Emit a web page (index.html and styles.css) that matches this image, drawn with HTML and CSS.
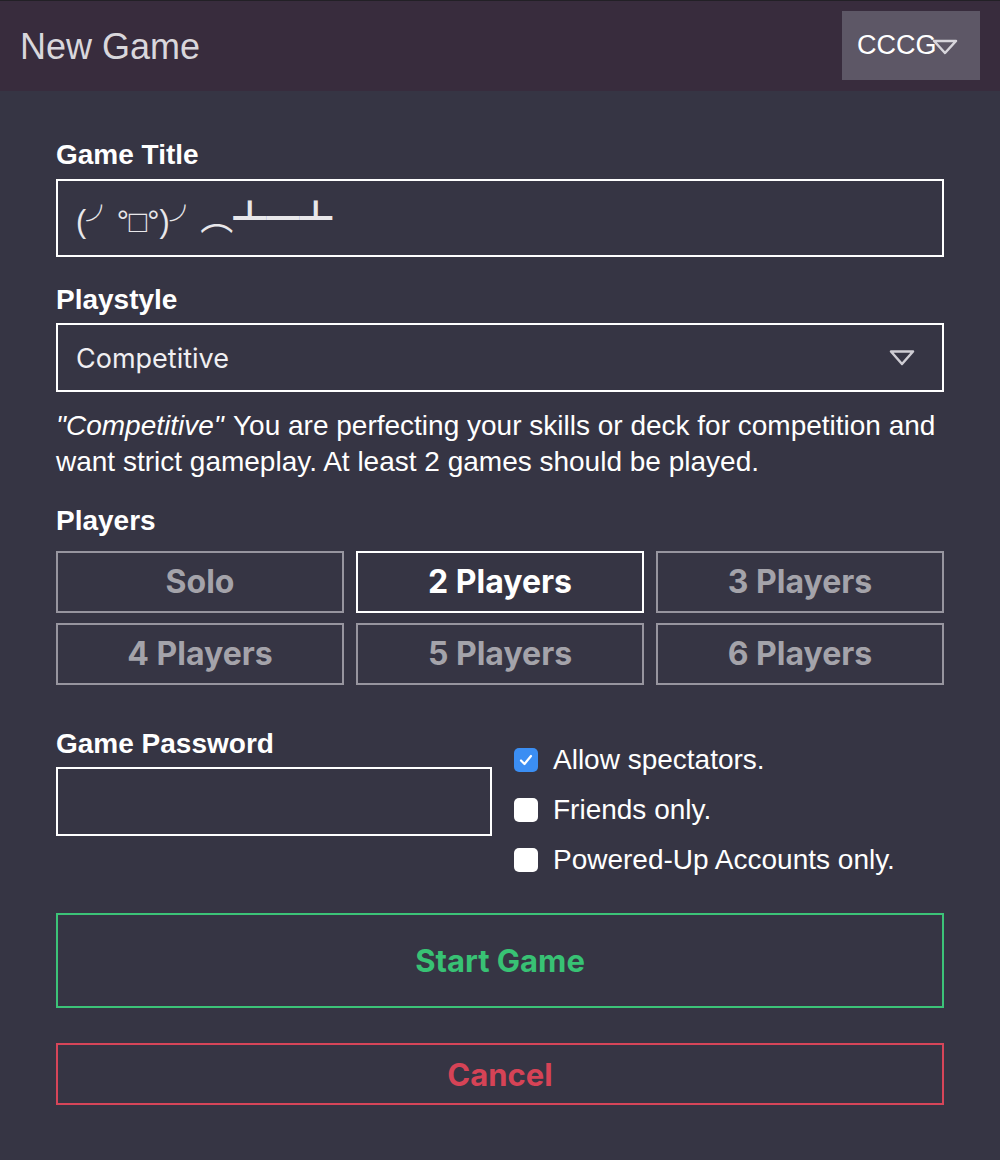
FILE: index.html
```html
<!DOCTYPE html>
<html>
<head>
<meta charset="utf-8">
<link rel="stylesheet" href="styles.css">
</head>
<body>
<header class="topbar">
  <h1 class="title">New Game</h1>
  <div class="format-select">
    <span class="format-text">CCCG</span>
    <svg class="format-caret" width="26" height="16" viewBox="0 0 26 16"><polygon points="2,2 24,2 13,14" fill="none" stroke="#d8d6dc" stroke-width="2.5" stroke-linejoin="round"/></svg>
  </div>
</header>
<main class="form">
  <label class="label">Game Title</label>
  <div class="text-input title-input"><span class="kao">(╯°□°)╯<span class="table-flip">︵┻━┻</span></span></div>

  <label class="label label-playstyle">Playstyle</label>
  <div class="select-input">
    <span class="select-text">Competitive</span>
    <svg class="select-caret" width="28" height="18" viewBox="0 0 28 18"><polygon points="3,2.5 25,2.5 14,15" fill="none" stroke="#cfcdd4" stroke-width="2.5" stroke-linejoin="round"/></svg>
  </div>
  <p class="desc"><em>"Competitive"</em> You are perfecting your skills or deck for competition and want strict gameplay. At least 2 games should be played.</p>

  <label class="label label-players">Players</label>
  <div class="players">
    <div class="pbtn">Solo</div>
    <div class="pbtn active">2 Players</div>
    <div class="pbtn">3 Players</div>
    <div class="pbtn">4 Players</div>
    <div class="pbtn">5 Players</div>
    <div class="pbtn">6 Players</div>
  </div>

  <div class="pw-row">
    <div class="pw-col">
      <label class="label">Game Password</label>
      <div class="text-input pw-input"></div>
    </div>
    <div class="checks">
      <div class="check-row"><span class="box checked"><svg width="24" height="24" viewBox="0 0 24 24"><path d="M7 12.5 L10.5 16 L17 8" fill="none" stroke="#fff" stroke-width="2.2" stroke-linecap="round" stroke-linejoin="round"/></svg></span><span class="check-label">Allow spectators.</span></div>
      <div class="check-row"><span class="box"></span><span class="check-label">Friends only.</span></div>
      <div class="check-row"><span class="box"></span><span class="check-label">Powered-Up Accounts only.</span></div>
    </div>
  </div>

  <div class="btn start">Start Game</div>
  <div class="btn cancel">Cancel</div>
</main>
</body>
</html>
```

FILE: styles.css
```css
html, body {
  margin: 0;
  padding: 0;
  background: #363544;
}
body {
  font-family: "Liberation Sans", Arial, sans-serif;
  color: #fff;
  border-top: 1px solid #222026;
}
.topbar {
  height: 90px;
  background: #382c3d;
  display: flex;
  align-items: flex-start;
  justify-content: space-between;
  padding: 0 20px 0 20px;
}
.title {
  margin: 0;
  font-family: "Liberation Sans", Arial, sans-serif;
  font-weight: normal;
  font-size: 36px;
  line-height: 92px;
  color: #d9d7dc;
}
.format-select {
  margin-top: 10px;
  width: 138px;
  height: 69px;
  background: #5d5766;
  display: flex;
  align-items: center;
  padding-left: 15px;
  box-sizing: border-box;
}
.format-text {
  font-family: "Liberation Sans", Arial, sans-serif;
  font-size: 27px;
  color: #fff;
}
.format-caret {
  margin-left: -5px;
  margin-top: 2px;
}
.form {
  padding: 48px 56px 40px 56px;
}
.label {
  display: block;
  font-weight: bold;
  font-size: 28px;
  line-height: 32px;
  margin-bottom: 8px;
}
.text-input {
  border: 2px solid #fff;
  box-sizing: border-box;
}
.title-input {
  height: 78px;
  display: flex;
  align-items: center;
  padding-left: 18px;
  font-family: "Liberation Sans", "Noto Sans CJK JP", sans-serif;
  color: #e8e7ea;
  padding-bottom: 4px;
}
.kao {
  font-size: 30.5px;
}
.table-flip {
  font-size: 33px;
  vertical-align: 2px;
}
.label-playstyle {
  margin-top: 27px;
  margin-bottom: 7px;
}
.select-input {
  height: 69px;
  border: 2px solid #fff;
  box-sizing: border-box;
  display: flex;
  align-items: center;
  justify-content: space-between;
  padding: 0 26px 0 18px;
}
.select-text {
  font-family: Inter, "Liberation Sans", sans-serif;
  font-size: 27px;
  color: #f0eff2;
  position: relative;
  top: 1px;
}
.desc {
  margin: 16px 0 0 0;
  font-size: 28px;
  line-height: 36px;
  color: #fff;
}
.desc em {
  margin-right: 2px;
}
.label-players {
  margin-top: 25px;
  margin-bottom: 14px;
}
.players {
  display: grid;
  grid-template-columns: repeat(3, 1fr);
  column-gap: 12px;
  row-gap: 10px;
}
.pbtn {
  height: 62px;
  box-sizing: border-box;
  border: 2px solid #97959f;
  color: #a4a3aa;
  display: flex;
  align-items: center;
  justify-content: center;
  font-family: Inter, "Liberation Sans", sans-serif;
  font-weight: 700;
  font-size: 32px;
  padding-bottom: 1px;
}
.pbtn.active {
  border-color: #fff;
  color: #fff;
}
.pw-row {
  margin-top: 43px;
  display: flex;
  gap: 22px;
}
.pw-col {
  width: 436px;
  flex: none;
}
.pw-col .label {
  margin-bottom: 7px;
}
.pw-input {
  height: 69px;
}
.checks {
  padding-top: 7px;
}
.check-row {
  height: 50px;
  display: flex;
  align-items: center;
}
.box {
  width: 24px;
  height: 24px;
  border-radius: 5px;
  background: #fff;
  margin-right: 15px;
  display: flex;
  align-items: center;
  justify-content: center;
  flex: none;
}
.box.checked {
  background: #3b8ef3;
}
.check-label {
  font-size: 28px;
  color: #fff;
  white-space: nowrap;
}
.btn {
  box-sizing: border-box;
  border: 2px solid;
  display: flex;
  align-items: center;
  justify-content: center;
  font-family: Inter, "Liberation Sans", sans-serif;
  font-weight: 700;
  font-size: 31px;
}
.start {
  margin-top: 28px;
  height: 95px;
  border-color: #3cc378;
  color: #38c274;
}
.cancel {
  margin-top: 35px;
  height: 62px;
  border-color: #d74559;
  color: #d64356;
}
```
